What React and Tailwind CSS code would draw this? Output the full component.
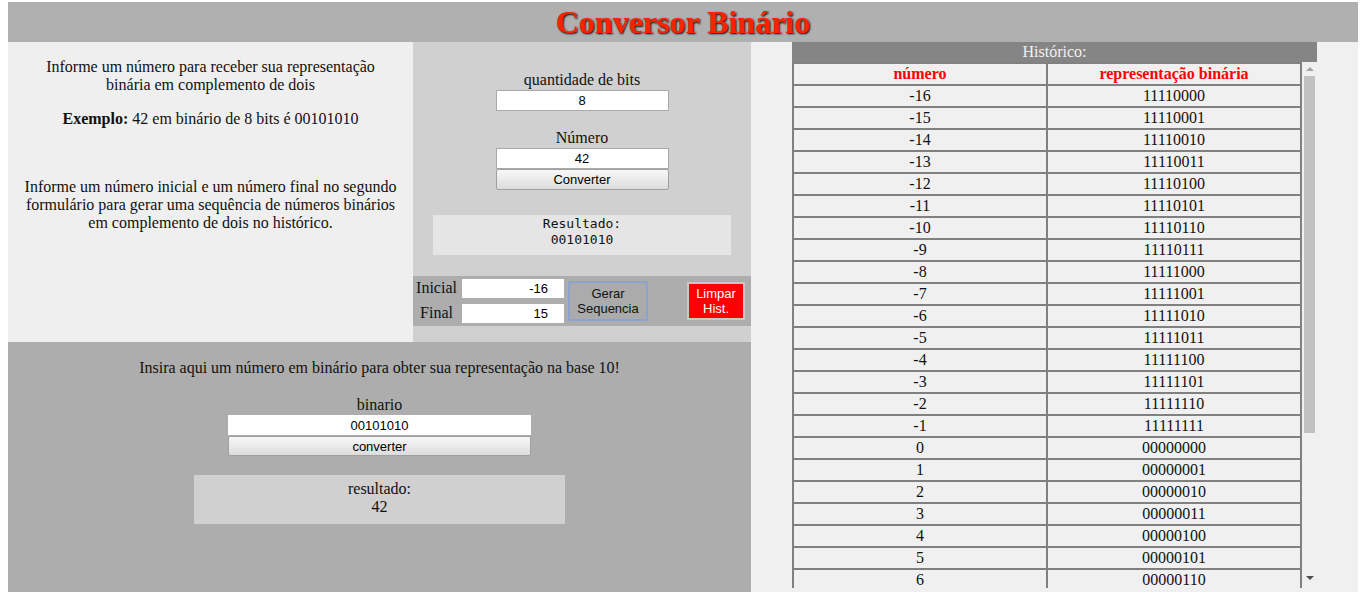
import React from 'react';

const toBin = (n) => ((n + 256) % 256).toString(2).padStart(8, '0');

const rows = [];
for (let i = -16; i <= 15; i++) rows.push(i);

const serif = "font-['Liberation_Serif',serif]";
const sans = "font-['Liberation_Sans',Arial,sans-serif]";

const InfoPanel = () => (
  <div className={`w-[405px] bg-[#efefef] pt-4 text-center text-base leading-[18px] text-[#111] ${serif}`}>
    <div className="w-[374px] mx-auto">
      <p>Informe um número para receber sua representação binária em complemento de dois</p>
      <p className="mt-4">
        <b>Exemplo:</b> 42 em binário de 8 bits é 00101010
      </p>
      <p className="mt-[50px]">
        Informe um número inicial e um número final no segundo formulário para gerar uma sequência de números binários em complemento de dois no histórico.
      </p>
    </div>
  </div>
);

const ConvertPanel = () => (
  <div className={`flex-1 bg-[#d0d0d0] pt-[29px] flex flex-col ${serif}`}>
    <div className="flex flex-col items-center text-base leading-[18px] text-[#111]">
      <label>quantidade de bits</label>
      <input
        readOnly
        value="8"
        className={`mt-[1px] w-[173px] h-[21px] bg-white border border-[#a9a9a9] text-center text-[13px] text-black outline-none ${sans}`}
      />
      <label className="mt-[18px]">Número</label>
      <input
        readOnly
        value="42"
        className={`mt-[1px] w-[173px] h-[21px] bg-white border border-[#a9a9a9] text-center text-[13px] text-black outline-none ${sans}`}
      />
      <button className={`w-[173px] h-[21px] border border-[#a0a0a0] rounded-[2px] bg-gradient-to-b from-[#f8f8f8] to-[#dcdcdc] text-[13px] text-black ${sans}`}>
        Converter
      </button>
    </div>
    <div className="mt-[25px] mx-5 h-10 bg-[#e5e5e5] pt-[1px] text-center font-['DejaVu_Sans_Mono',monospace] text-[13px] leading-4 text-[#111]">
      Resultado:
      <br />
      00101010
    </div>
    <div className="mt-[21px] h-[50px] bg-[#adadad] flex items-center pl-[2px] text-[#111]">
      <div className="grid grid-cols-[43px_102px] gap-x-1 gap-y-[6px] text-base">
        <span className="self-start text-center leading-[17px]">Inicial</span>
        <input readOnly value="-16" className={`h-[19px] bg-white text-right pr-4 text-[13px] text-black outline-none ${sans}`} />
        <span className="self-start text-center leading-[17px]">Final</span>
        <input readOnly value="15" className={`h-[19px] bg-white text-right pr-4 text-[13px] text-black outline-none ${sans}`} />
      </div>
      <button className={`ml-1 w-20 h-10 bg-[#ababab] border-2 border-[#8aa3d0] rounded-[2px] text-[13px] leading-[15px] text-[#111] ${sans}`}>
        Gerar
        <br />
        Sequencia
      </button>
      <button className={`ml-[39px] w-[58px] h-[38px] bg-[#ff0000] border-2 border-[#c8c8c8] text-[13px] leading-[15px] text-white ${sans}`}>
        Limpar
        <br />
        Hist.
      </button>
    </div>
  </div>
);

const BinaryPanel = () => (
  <div className={`h-[250px] bg-[#adadad] pt-[17px] flex flex-col items-center text-[#111] ${serif}`}>
    <p className="text-base leading-[18px]">Insira aqui um número em binário para obter sua representação na base 10!</p>
    <label className="mt-[19px] text-base leading-[18px]">binario</label>
    <input
      readOnly
      value="00101010"
      className={`mt-[1px] w-[303px] h-5 bg-white text-center text-[13px] text-black outline-none ${sans}`}
    />
    <button className={`mt-[1px] w-[303px] h-5 border border-[#a0a0a0] rounded-[2px] bg-gradient-to-b from-[#f8f8f8] to-[#dcdcdc] text-[13px] text-black ${sans}`}>
      converter
    </button>
    <div className="mt-[19px] w-[371px] h-[49px] bg-[#d0d0d0] pt-[5px] text-center text-base leading-[18px]">
      resultado:
      <br />
      42
    </div>
  </div>
);

const Scrollbar = () => (
  <div className="w-[15px] flex flex-col items-center bg-[#f0f0f0]">
    <div className="mt-[5px] w-0 h-0 border-x-4 border-x-transparent border-b-4 border-b-[#a3a3a3]" />
    <div className="mt-[5px] w-[11px] h-[357px] bg-[#c1c1c1]" />
    <div className="flex-1" />
    <div className="mb-2 w-0 h-0 border-x-4 border-x-transparent border-t-4 border-t-[#505050]" />
  </div>
);

const History = () => (
  <div className={`flex-1 bg-[#f0f0f0] flex justify-center ${serif}`}>
    <div className="w-[525px]">
      <div className="h-5 bg-[#858585] text-center text-base leading-5 text-[#f0f0f0]">Histórico:</div>
      <div className="h-[526px] flex">
        <div className="w-[510px] overflow-hidden">
          <table className="w-[510px] border-collapse table-fixed text-base text-[#111]">
            <thead>
              <tr className="h-[22px]">
                <th className="border-2 border-[#808080] text-[#ff0000] font-bold leading-[18px]">número</th>
                <th className="border-2 border-[#808080] text-[#ff0000] font-bold leading-[18px]">representação binária</th>
              </tr>
            </thead>
            <tbody>
              {rows.map((n) => (
                <tr key={n} className="h-[22px]">
                  <td className="border-2 border-[#808080] text-center leading-[18px]">{n}</td>
                  <td className="border-2 border-[#808080] text-center leading-[18px]">{toBin(n)}</td>
                </tr>
              ))}
            </tbody>
          </table>
        </div>
        <Scrollbar />
      </div>
    </div>
  </div>
);

export default function App() {
  return (
    <div className="bg-white min-h-screen pt-[2px] px-2">
      <header className="h-10 bg-[#b0b0b0] flex items-center justify-center">
        <h1 className={`text-[32px] font-bold leading-10 text-[#ff2200] [text-shadow:1px_1px_2px_#000] ${serif}`}>
          Conversor Binário
        </h1>
      </header>
      <div className="flex">
        <div className="w-[743px] flex flex-col">
          <div className="flex h-[300px]">
            <InfoPanel />
            <ConvertPanel />
          </div>
          <BinaryPanel />
        </div>
        <History />
      </div>
    </div>
  );
}
